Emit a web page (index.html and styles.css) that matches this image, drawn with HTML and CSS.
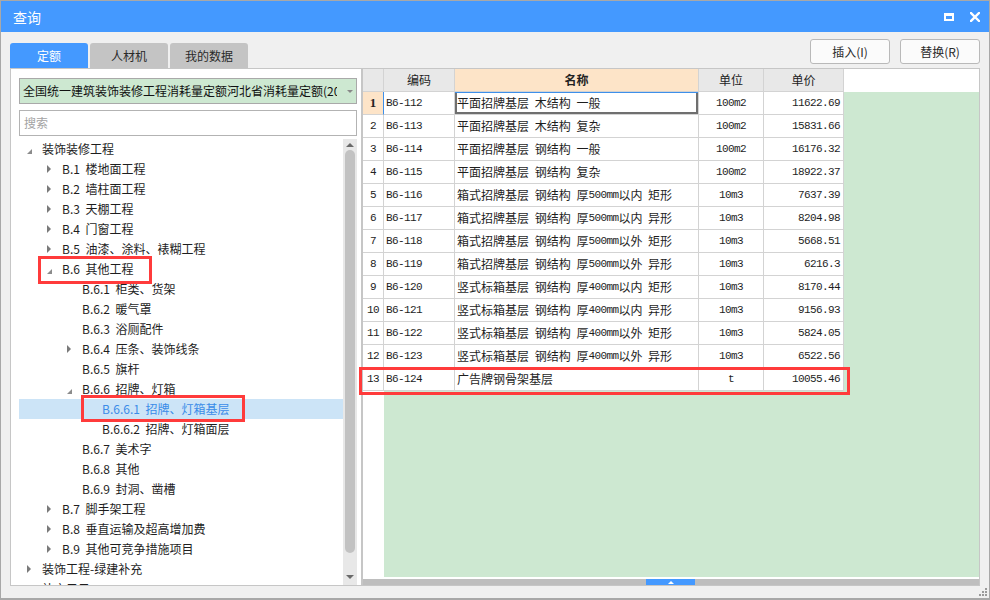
FILE: index.html
```html
<!DOCTYPE html>
<html lang="zh-CN">
<head>
<meta charset="utf-8">
<title>查询</title>
<link rel="stylesheet" href="styles.css">
</head>
<body>
<div class="window">
  <div class="titlebar">
    <span class="title">查询</span>
    <div class="controls">
      <svg class="ic-max" width="10" height="8" viewBox="0 0 10 8"><rect x="1" y="1.5" width="8" height="5.5" fill="none" stroke="#fff" stroke-width="2"/><rect x="0" y="0" width="10" height="3" fill="#fff"/></svg>
      <svg class="ic-close" width="10" height="10" viewBox="0 0 10 10"><path d="M1 1L9 9M9 1L1 9" stroke="#fff" stroke-width="2.4" stroke-linecap="square"/></svg>
    </div>
  </div>

  <div class="toolbar">
    <div class="tabs">
      <div class="tab active">定额</div>
      <div class="tab">人材机</div>
      <div class="tab">我的数据</div>
    </div>
    <div class="buttons">
      <div class="btn">插入(I)</div>
      <div class="btn">替换(R)</div>
    </div>
  </div>

  <div class="main">
    <div class="left">
      <div class="select">
        <span class="select-text">全国统一建筑装饰装修工程消耗量定额河北省消耗量定额(2012)</span>
        <span class="select-arrow"></span>
      </div>
      <div class="search">搜索</div>
      <div class="treewrap">
        <div class="tree">
          <div class="node l0"><span class="tg open"></span>装饰装修工程</div>
          <div class="node l1"><span class="tg closed"></span>B.1 楼地面工程</div>
          <div class="node l1"><span class="tg closed"></span>B.2 墙柱面工程</div>
          <div class="node l1"><span class="tg closed"></span>B.3 天棚工程</div>
          <div class="node l1"><span class="tg closed"></span>B.4 门窗工程</div>
          <div class="node l1"><span class="tg closed"></span>B.5 油漆、涂料、裱糊工程</div>
          <div class="node l1"><span class="tg open"></span>B.6 其他工程</div>
          <div class="node l2"><span class="tg"></span>B.6.1 柜类、货架</div>
          <div class="node l2"><span class="tg"></span>B.6.2 暖气罩</div>
          <div class="node l2"><span class="tg"></span>B.6.3 浴厕配件</div>
          <div class="node l2"><span class="tg closed"></span>B.6.4 压条、装饰线条</div>
          <div class="node l2"><span class="tg"></span>B.6.5 旗杆</div>
          <div class="node l2"><span class="tg open"></span>B.6.6 招牌、灯箱</div>
          <div class="node l3 selected"><span class="tg"></span>B.6.6.1 招牌、灯箱基层</div>
          <div class="node l3"><span class="tg"></span>B.6.6.2 招牌、灯箱面层</div>
          <div class="node l2"><span class="tg"></span>B.6.7 美术字</div>
          <div class="node l2"><span class="tg"></span>B.6.8 其他</div>
          <div class="node l2"><span class="tg"></span>B.6.9 封洞、凿槽</div>
          <div class="node l1"><span class="tg closed"></span>B.7 脚手架工程</div>
          <div class="node l1"><span class="tg closed"></span>B.8 垂直运输及超高增加费</div>
          <div class="node l1"><span class="tg closed"></span>B.9 其他可竞争措施项目</div>
          <div class="node l0"><span class="tg closed"></span>装饰工程-绿建补充</div>
          <div class="node l0"><span class="tg closed"></span>补充子目</div>
        </div>
        <div class="vscroll">
          <div class="vs-up"><span class="tri-up"></span></div>
          <div class="vs-thumb"></div>
          <div class="vs-space"></div>
          <div class="vs-down"><span class="tri-down"></span></div>
        </div>
      </div>
    </div>

    <div class="right">
      <div class="grid">
        <div class="row head">
          <div class="cell num"></div>
          <div class="cell hc">编码</div>
          <div class="cell hc hot">名称</div>
          <div class="cell hc">单位</div>
          <div class="cell hc">单价</div>
          <div class="cell fill-w"></div>
        </div>
        <div class="row">
          <div class="cell num cur"><b>1</b></div>
          <div class="cell code m">B6-112</div>
          <div class="cell name focus">平面招牌基层 木结构 一般</div>
          <div class="cell unit m">100m2</div>
          <div class="cell price m">11622.69</div>
          <div class="cell fill"></div>
        </div>
        <div class="row">
          <div class="cell num m">2</div>
          <div class="cell code m">B6-113</div>
          <div class="cell name">平面招牌基层 木结构 复杂</div>
          <div class="cell unit m">100m2</div>
          <div class="cell price m">15831.66</div>
          <div class="cell fill"></div>
        </div>
        <div class="row">
          <div class="cell num m">3</div>
          <div class="cell code m">B6-114</div>
          <div class="cell name">平面招牌基层 钢结构 一般</div>
          <div class="cell unit m">100m2</div>
          <div class="cell price m">16176.32</div>
          <div class="cell fill"></div>
        </div>
        <div class="row">
          <div class="cell num m">4</div>
          <div class="cell code m">B6-115</div>
          <div class="cell name">平面招牌基层 钢结构 复杂</div>
          <div class="cell unit m">100m2</div>
          <div class="cell price m">18922.37</div>
          <div class="cell fill"></div>
        </div>
        <div class="row">
          <div class="cell num m">5</div>
          <div class="cell code m">B6-116</div>
          <div class="cell name">箱式招牌基层 钢结构 厚<span class="m">500mm</span>以内 矩形</div>
          <div class="cell unit m">10m3</div>
          <div class="cell price m">7637.39</div>
          <div class="cell fill"></div>
        </div>
        <div class="row">
          <div class="cell num m">6</div>
          <div class="cell code m">B6-117</div>
          <div class="cell name">箱式招牌基层 钢结构 厚<span class="m">500mm</span>以内 异形</div>
          <div class="cell unit m">10m3</div>
          <div class="cell price m">8204.98</div>
          <div class="cell fill"></div>
        </div>
        <div class="row">
          <div class="cell num m">7</div>
          <div class="cell code m">B6-118</div>
          <div class="cell name">箱式招牌基层 钢结构 厚<span class="m">500mm</span>以外 矩形</div>
          <div class="cell unit m">10m3</div>
          <div class="cell price m">5668.51</div>
          <div class="cell fill"></div>
        </div>
        <div class="row">
          <div class="cell num m">8</div>
          <div class="cell code m">B6-119</div>
          <div class="cell name">箱式招牌基层 钢结构 厚<span class="m">500mm</span>以外 异形</div>
          <div class="cell unit m">10m3</div>
          <div class="cell price m">6216.3</div>
          <div class="cell fill"></div>
        </div>
        <div class="row">
          <div class="cell num m">9</div>
          <div class="cell code m">B6-120</div>
          <div class="cell name">竖式标箱基层 钢结构 厚<span class="m">400mm</span>以内 矩形</div>
          <div class="cell unit m">10m3</div>
          <div class="cell price m">8170.44</div>
          <div class="cell fill"></div>
        </div>
        <div class="row">
          <div class="cell num m">10</div>
          <div class="cell code m">B6-121</div>
          <div class="cell name">竖式标箱基层 钢结构 厚<span class="m">400mm</span>以内 异形</div>
          <div class="cell unit m">10m3</div>
          <div class="cell price m">9156.93</div>
          <div class="cell fill"></div>
        </div>
        <div class="row">
          <div class="cell num m">11</div>
          <div class="cell code m">B6-122</div>
          <div class="cell name">竖式标箱基层 钢结构 厚<span class="m">400mm</span>以外 矩形</div>
          <div class="cell unit m">10m3</div>
          <div class="cell price m">5824.05</div>
          <div class="cell fill"></div>
        </div>
        <div class="row">
          <div class="cell num m">12</div>
          <div class="cell code m">B6-123</div>
          <div class="cell name">竖式标箱基层 钢结构 厚<span class="m">400mm</span>以外 异形</div>
          <div class="cell unit m">10m3</div>
          <div class="cell price m">6522.56</div>
          <div class="cell fill"></div>
        </div>
        <div class="row">
          <div class="cell num m">13</div>
          <div class="cell code m">B6-124</div>
          <div class="cell name">广告牌钢骨架基层</div>
          <div class="cell unit m">t</div>
          <div class="cell price m">10055.46</div>
          <div class="cell fill"></div>
        </div>
        <div class="rest">
          <div class="rest-num"></div>
          <div class="rest-fill"></div>
        </div>
      </div>
      <div class="hscroll">
        <div class="hs-thumb"><span class="tri-up w"></span></div>
      </div>
    </div>
  </div>

  <div class="footer">
    <svg class="grip" width="9" height="9" viewBox="0 0 9 9">
      <rect x="6" y="0" width="2" height="2" fill="#9a9a9a"/>
      <rect x="3" y="3" width="2" height="2" fill="#9a9a9a"/>
      <rect x="6" y="3" width="2" height="2" fill="#9a9a9a"/>
      <rect x="0" y="6" width="2" height="2" fill="#9a9a9a"/>
      <rect x="3" y="6" width="2" height="2" fill="#9a9a9a"/>
      <rect x="6" y="6" width="2" height="2" fill="#9a9a9a"/>
    </svg>
  </div>

  <div class="mark mark-b6"></div>
  <div class="mark mark-b661"></div>
  <div class="mark mark-row13"></div>
</div>
</body>
</html>
```

FILE: styles.css
```css
* { box-sizing: border-box; margin: 0; padding: 0; }
html, body { width: 990px; height: 600px; overflow: hidden; }
body {
  font-family: "Noto Sans CJK SC", "Microsoft YaHei", sans-serif;
  font-size: 12px;
  color: #1e1e1e;
  background: #f0f0f0;
}
.window {
  position: relative;
  width: 990px;
  height: 600px;
  border: 1px solid #a8a8a8;
  border-bottom-width: 2px;
  background: #f0f0f0;
  display: flex;
  flex-direction: column;
}

/* title bar */
.titlebar {
  height: 31px;
  flex: none;
  background: #4499ff;
  color: #fff;
  display: flex;
  align-items: center;
  justify-content: space-between;
  padding: 0 9px 0 12px;
}
.title { font-size: 14px; line-height: 16px; }
.controls { display: flex; align-items: center; gap: 16px; }

/* toolbar with tabs + buttons */
.toolbar {
  height: 36px;
  flex: none;
  display: flex;
  justify-content: space-between;
  padding: 0 9px;
}
.tabs { display: flex; gap: 2px; align-self: flex-end; }
.tab {
  width: 78px;
  height: 25px;
  background: #c4c4c4;
  color: #2a2a2a;
  border-radius: 3px 3px 0 0;
  display: flex;
  align-items: center;
  justify-content: center;
  line-height: 14px;
}
.tab.active { background: #4499ff; color: #fff; }
.buttons { display: flex; gap: 10px; padding-top: 7px; }
.btn {
  width: 80px;
  height: 25px;
  border: 1px solid #b9b9b9;
  border-radius: 3px;
  background: #fbfbfb;
  color: #2a2a2a;
  display: flex;
  align-items: center;
  justify-content: center;
  line-height: 14px;
}

/* main area */
.main {
  height: 518px;
  flex: none;
  display: flex;
  padding: 0 9px;
}
.left {
  width: 352px;
  flex: none;
  background: #fff;
  border: 1px solid #c6c6c6;
  display: flex;
  flex-direction: column;
  padding: 9px 4px 0 8px;
}
.select {
  height: 26px;
  flex: none;
  background: #cde8d1;
  border: 1px solid #a9a9a9;
  display: flex;
  align-items: center;
  padding-left: 3px;
}
.select-text {
  flex: none;
  width: 314px;
  overflow: hidden;
  white-space: nowrap;
  line-height: 16px;
  color: #111;
}
.select-arrow {
  margin-left: 10px;
  width: 0; height: 0;
  border-left: 3px solid transparent;
  border-right: 3px solid transparent;
  border-top: 3px solid #888;
}
.search {
  height: 26px;
  flex: none;
  margin-top: 6px;
  border: 1px solid #b3b3b3;
  color: #a3a3a3;
  padding-left: 4px;
  display: flex;
  align-items: center;
  line-height: 16px;
}
.treewrap {
  flex: 1;
  margin-top: 3px;
  display: flex;
  overflow: hidden;
  min-height: 0;
}
.tree { flex: 1; overflow: hidden; }
.node {
  height: 20px;
  display: flex;
  align-items: center;
  white-space: pre;
  line-height: 16px;
  color: #1e1e1e;
  word-spacing: 3px;
}
.node.l0 { padding-left: 2px; }
.node.l1 { padding-left: 22px; }
.node.l2 { padding-left: 42px; }
.node.l3 { padding-left: 62px; }
.node.selected { background: #cce4f7; color: #3b8ce8; }
.tg {
  flex: none;
  width: 16px;
  height: 20px;
  margin-right: 5px;
  position: relative;
}
.tg.closed::before {
  content: "";
  position: absolute;
  left: 6px; top: 6px;
  border-left: 4px solid #7a7a7a;
  border-top: 4px solid transparent;
  border-bottom: 4px solid transparent;
}
.tg.open::before {
  content: "";
  position: absolute;
  left: 6px; top: 10px;
  border-right: 5px solid #8c8c8c;
  border-top: 5px solid transparent;
}
.vscroll {
  width: 14px;
  flex: none;
  background: #e8e8e8;
  display: flex;
  flex-direction: column;
  align-items: center;
}
.vs-up { height: 11px; flex: none; display: flex; align-items: center; justify-content: center; }
.vs-thumb { width: 10px; height: 403px; flex: none; background: #c2c2c2; border-radius: 5px; }
.vs-space { flex: 1; }
.vs-down { height: 12px; flex: none; display: flex; align-items: flex-start; justify-content: center; padding-top: 2px; }
.tri-up {
  width: 0; height: 0;
  border-left: 4px solid transparent;
  border-right: 4px solid transparent;
  border-bottom: 4px solid #6a6a6a;
}
.tri-down {
  width: 0; height: 0;
  border-left: 4px solid transparent;
  border-right: 4px solid transparent;
  border-top: 4px solid #6a6a6a;
}

/* right grid */
.right {
  flex: 1;
  background: #fff;
  border: 1px solid #c6c6c6;
  display: flex;
  flex-direction: column;
  min-width: 0;
}
.grid { flex: 1; display: flex; flex-direction: column; min-height: 0; }
.row {
  display: grid;
  grid-template-columns: 21px 71px 244px 65px 80px 1fr;
  height: 23px;
  flex: none;
}
.cell {
  border-right: 1px solid #d3d3d3;
  border-bottom: 1px solid #d3d3d3;
  display: flex;
  align-items: center;
  white-space: pre;
  overflow: hidden;
  line-height: 14px;
  font-size: 12px;
}
.head .cell { background: #e8e8e8; }
.head .hc { justify-content: center; color: #222; }
.head .hot { background: #fde4c8; font-weight: bold; }
.head .fill-w { background: #fff; border: 0; }
.m {
  font-family: "Liberation Mono", "DejaVu Sans Mono", monospace;
  font-size: 11px;
  letter-spacing: -0.6px;
}
.num { justify-content: center; color: #222; }
.num b { font-family: "Liberation Serif", serif; font-size: 13px; }
.num.cur { background: #fde4c8; border-right-color: #3d8fea; }
.code { padding-left: 2px; }
.name { padding-left: 2px; font-size: 12px; word-spacing: 3px; }
.name .m { font-size: 11px; }
.unit { justify-content: center; }
.price { justify-content: flex-end; padding-right: 3px; }
.fill { background: #cde8d1; border: 0; }
.focus {
  box-shadow: inset 0 1px 0 #3d8fea, inset 2px 0 0 #6f6f6f, inset -2px 0 0 #6f6f6f, inset 0 -2px 0 #6f6f6f;
}
.rest { flex: 1; display: flex; min-height: 0; padding-bottom: 2px; }
.rest-num { width: 21px; flex: none; }
.rest-fill { flex: 1; background: #cde8d1; }
.hscroll {
  height: 6px;
  flex: none;
  background: #bebebe;
  display: flex;
}
.hs-thumb {
  margin-left: 283px;
  width: 49px;
  height: 6px;
  background: #4499ff;
  display: flex;
  align-items: center;
  justify-content: center;
}
.tri-up.w {
  border-left-width: 3px;
  border-right-width: 3px;
  border-bottom: 3px solid #fff;
}

/* footer */
.footer {
  height: 12px;
  flex: none;
  display: flex;
  justify-content: flex-end;
  align-items: flex-end;
  padding: 0 1px 1px 0;
}

/* annotation marks */
.mark {
  position: absolute;
  border: 3px solid #ff3b3b;
  pointer-events: none;
}
.mark-b6 { left: 37px; top: 255px; width: 114px; height: 28px; }
.mark-b661 { left: 80px; top: 394px; width: 164px; height: 27px; }
.mark-row13 { left: 358px; top: 366px; width: 491px; height: 28px; }
```
